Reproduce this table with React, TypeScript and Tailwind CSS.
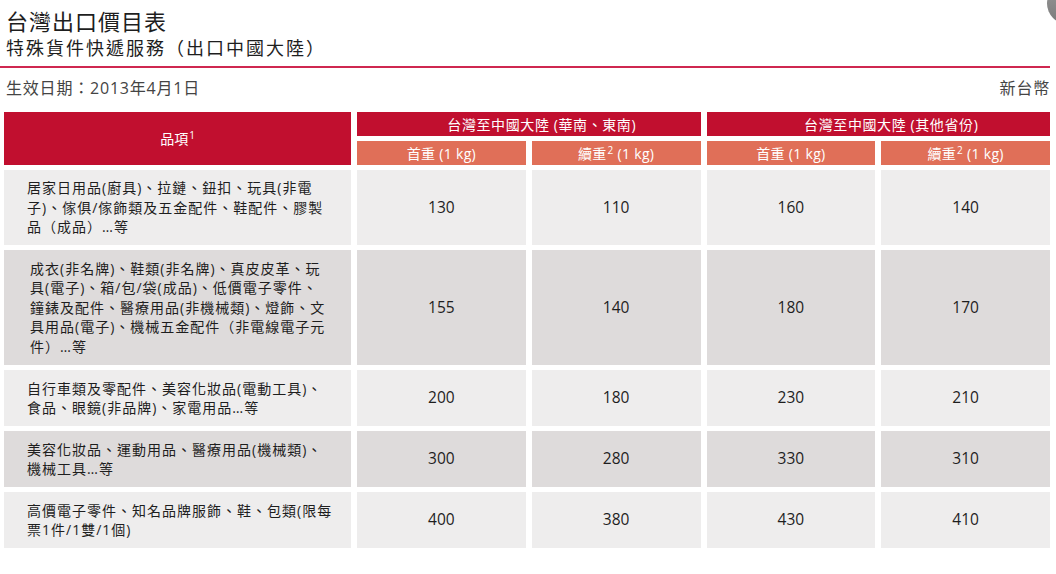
import React from "react"

type Row = {
  lines: string[]
  indent?: boolean
  prices: number[]
  dark?: boolean
  pad: string
}

const rows: Row[] = [
  {
    lines: ["居家日用品(廚具)、拉鏈、鈕扣、玩具(非電", "子)、傢俱/傢飾類及五金配件、鞋配件、膠製", "品（成品）…等"],
    prices: [130, 110, 160, 140],
    pad: "py-[8px]",
  },
  {
    lines: [
      "成衣(非名牌)、鞋類(非名牌)、真皮皮革、玩",
      "具(電子)、箱/包/袋(成品)、低價電子零件、",
      "鐘錶及配件、醫療用品(非機械類)、燈飾、文",
      "具用品(電子)、機械五金配件（非電線電子元",
      "件）…等",
    ],
    indent: true,
    prices: [155, 140, 180, 170],
    dark: true,
    pad: "py-[9px]",
  },
  {
    lines: ["自行車類及零配件、美容化妝品(電動工具)、", "食品、眼鏡(非品牌)、家電用品…等"],
    prices: [200, 180, 230, 210],
    pad: "py-[8.5px]",
  },
  {
    lines: ["美容化妝品、運動用品、醫療用品(機械類)、", "機械工具…等"],
    prices: [300, 280, 330, 310],
    dark: true,
    pad: "py-[8.5px]",
  },
  {
    lines: ["高價電子零件、知名品牌服飾、鞋、包類(限每", "票1件/1雙/1個)"],
    prices: [400, 380, 430, 410],
    pad: "py-[8.5px]",
  },
]

function WeightHead({ extra }: { extra?: boolean }) {
  return (
    <div className="h-[24px] flex items-center justify-center bg-[#e06f58] text-white text-[14px] tracking-[0.3px]">
      {extra ? (
        <span>
          續重<sup className="text-[10px] relative top-[-5px] align-baseline ml-[1px]">2</sup> (1 kg)
        </span>
      ) : (
        <span>首重 (1 kg)</span>
      )}
    </div>
  )
}

export default function App() {
  return (
    <div className="relative w-[1056px] h-[574px] overflow-hidden bg-white text-[#1e1e1e] font-['Open_Sans','Noto_Sans_CJK_TC',sans-serif]">
      {/* corner knob */}
      <div className="absolute left-[1047px] top-[-17px] w-[41px] h-[41px] rounded-full bg-gradient-to-b from-[#9a9a9a] to-[#7a7a7a]" />

      <div className="px-[6px] pt-[6px]">
        <h1 className="text-[22px] leading-[28px] tracking-[1px] font-['Noto_Sans_CJK_TC',sans-serif]">台灣出口價目表</h1>
        <h2 className="mt-[1px] text-[18px] leading-[24px] tracking-[2px] font-['Noto_Sans_CJK_TC',sans-serif]">
          特殊貨件快遞服務（出口中國大陸）
        </h2>
      </div>
      <div className="mt-[7px] h-[2px] w-[1050px] bg-[#cf2750]" />

      <div className="mt-[10px] flex justify-between pl-[6px] pr-[6px] text-[16px] leading-[20px] tracking-[0.8px] text-[#444]">
        <span>生效日期：2013年4月1日</span>
        <span>新台幣</span>
      </div>

      <div className="ml-[4px] mt-[14px] w-[1046px] grid grid-cols-[347px_repeat(4,minmax(0,1fr))] gap-x-[6px] gap-y-[5px]">
        <div className="row-span-2 flex items-center justify-center bg-[#c10f2f] text-white text-[14px]">
          <span>
            品項<sup className="text-[10px] relative top-[-5px] align-baseline ml-[1px]">1</sup>
          </span>
        </div>
        <div className="col-span-2 h-[24px] pl-[26px] flex items-center justify-center bg-[#c10f2f] text-white text-[14px] tracking-[0.6px]">
          台灣至中國大陸 (華南、東南)
        </div>
        <div className="col-span-2 h-[24px] pl-[26px] flex items-center justify-center bg-[#c10f2f] text-white text-[14px] tracking-[0.6px]">
          台灣至中國大陸 (其他省份)
        </div>
        <WeightHead />
        <WeightHead extra />
        <WeightHead />
        <WeightHead extra />

        {rows.map((row, i) => {
          const bg = row.dark ? "bg-[#dedbdb]" : "bg-[#eeeded]"
          return (
            <React.Fragment key={i}>
              <div
                className={`${bg} ${row.pad} text-[14px] leading-[19.5px] tracking-[1px] ${
                  row.indent ? "pl-[26px]" : "pl-[23px]"
                }`}
              >
                {row.lines.map((l, j) => (
                  <div key={j}>{l}</div>
                ))}
              </div>
              {row.prices.map((p, j) => (
                <div key={j} className={`${bg} flex items-center justify-center text-[15.5px]`}>
                  {p}
                </div>
              ))}
            </React.Fragment>
          )
        })}
      </div>
    </div>
  )
}
